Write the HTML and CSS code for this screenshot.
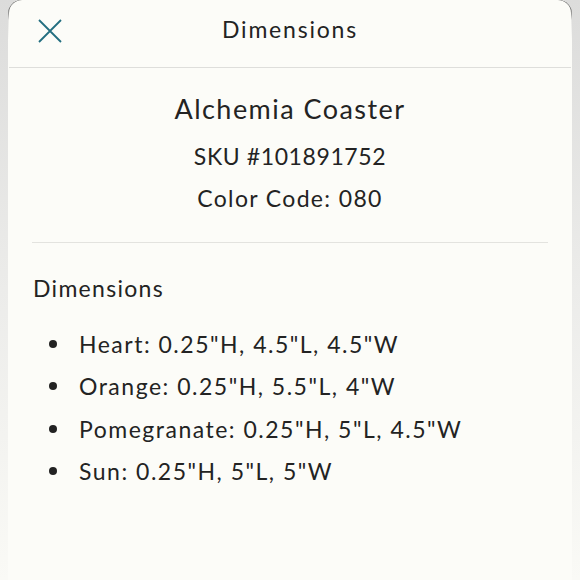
FILE: index.html
```html
<!DOCTYPE html>
<html lang="en">
<head>
<meta charset="utf-8">
<title>Dimensions</title>
<link rel="stylesheet" href="styles.css">
</head>
<body>
<div class="frame">
  <div class="sheet">
    <header class="topbar">
      <button class="close" aria-label="Close">
        <svg width="24" height="24" viewBox="0 0 24 24"><path d="M1 1 L23 23 M23 1 L1 23" stroke="#226e80" stroke-width="1.8" fill="none"/></svg>
      </button>
      <h1 class="title">Dimensions</h1>
    </header>
    <section class="product">
      <h2 class="name">Alchemia Coaster</h2>
      <p class="meta sku">SKU #101891752</p>
      <p class="meta code">Color Code: 080</p>
    </section>
    <section class="dims">
      <h3 class="dims-title">Dimensions</h3>
      <ul class="list">
        <li>Heart: 0.25"H, 4.5"L, 4.5"W</li>
        <li>Orange: 0.25"H, 5.5"L, 4"W</li>
        <li>Pomegranate: 0.25"H, 5"L, 4.5"W</li>
        <li>Sun: 0.25"H, 5"L, 5"W</li>
      </ul>
    </section>
  </div>
</div>
</body>
</html>
```
FILE: styles.css
```css
html, body {
  margin: 0;
  padding: 0;
  height: 100%;
}
body {
  background: linear-gradient(to bottom, #dcdcdb 0%, #ececea 50%, #fafaf6 100%);
  font-family: Lato, "Open Sans", sans-serif;
  color: #232323;
}
.frame {
  margin: 0 8px;
  height: 100%;
  padding: 0 1px;
  border-radius: 14px 14px 0 0;
  background: linear-gradient(to bottom, #111 0, #555 8px, #e8e8e6 20px, #fcfcf8 40px);
}
.sheet {
  height: 100%;
  background: #fcfcf8;
  border-radius: 13px 13px 0 0;
  overflow: hidden;
}
.topbar {
  display: flex;
  align-items: center;
  justify-content: center;
  height: 67px;
  border-bottom: 1px solid #dededb;
  position: relative;
}
.close {
  position: absolute;
  left: 29px;
  top: 19px;
  background: none;
  border: 0;
  padding: 0;
  width: 24px;
  height: 24px;
}
.close svg { display: block; }
.title {
  margin: 0 0 9px;
  font-size: 23px;
  font-weight: 400;
  letter-spacing: 1.8px;
}
.product {
  margin: 0 23px;
  padding: 25px 0 23px;
  border-bottom: 1px solid #e3e3df;
  text-align: center;
}
.name {
  margin: 0 0 10px;
  font-size: 27px;
  font-weight: 400;
  line-height: 32px;
  letter-spacing: 1.45px;
}
.meta {
  margin: 0;
  font-size: 23px;
  line-height: 42px;
  letter-spacing: 0.6px;
}
.meta.code {
  letter-spacing: 1.35px;
}
.dims {
  padding: 31px 24px 0;
}
.dims-title {
  margin: 0 0 21px;
  font-size: 23px;
  font-weight: 400;
  letter-spacing: 1.3px;
  line-height: 28px;
}
.list {
  margin: 0;
  padding: 0;
  list-style: none;
}
.list li {
  display: flex;
  align-items: center;
  gap: 22px;
  font-size: 23px;
  line-height: 42.3px;
  letter-spacing: 1.5px;
  padding-left: 16px;
}
.list li::before {
  content: "";
  width: 8px;
  height: 8px;
  border-radius: 50%;
  background: #222;
  flex: none;
}
```
